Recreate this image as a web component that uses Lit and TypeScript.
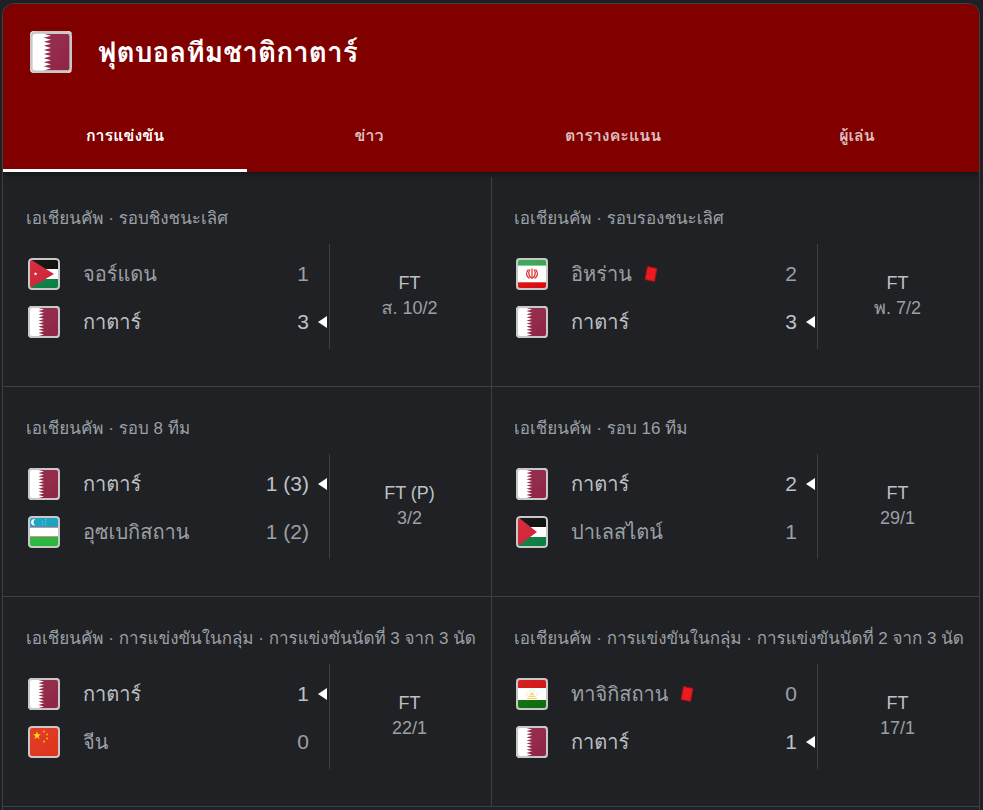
import { LitElement, html, css, svg } from "lit";
import { customElement, property } from "lit/decorators.js";

type Country = "qa" | "jo" | "ir" | "uz" | "ps" | "cn" | "tj";

interface Side {
  flag: Country;
  name: string;
  score: string;
  winner?: boolean;
  redCard?: boolean;
}

interface Match {
  stage: string;
  sides: Side[];
  status: string;
  date: string;
}

const matches: Match[] = [
  {
    stage: "เอเชียนคัพ · รอบชิงชนะเลิศ",
    sides: [
      { flag: "jo", name: "จอร์แดน", score: "1" },
      { flag: "qa", name: "กาตาร์", score: "3", winner: true },
    ],
    status: "FT",
    date: "ส. 10/2",
  },
  {
    stage: "เอเชียนคัพ · รอบรองชนะเลิศ",
    sides: [
      { flag: "ir", name: "อิหร่าน", score: "2", redCard: true },
      { flag: "qa", name: "กาตาร์", score: "3", winner: true },
    ],
    status: "FT",
    date: "พ. 7/2",
  },
  {
    stage: "เอเชียนคัพ · รอบ 8 ทีม",
    sides: [
      { flag: "qa", name: "กาตาร์", score: "1 (3)", winner: true },
      { flag: "uz", name: "อุซเบกิสถาน", score: "1 (2)" },
    ],
    status: "FT (P)",
    date: "3/2",
  },
  {
    stage: "เอเชียนคัพ · รอบ 16 ทีม",
    sides: [
      { flag: "qa", name: "กาตาร์", score: "2", winner: true },
      { flag: "ps", name: "ปาเลสไตน์", score: "1" },
    ],
    status: "FT",
    date: "29/1",
  },
  {
    stage: "เอเชียนคัพ · การแข่งขันในกลุ่ม · การแข่งขันนัดที่ 3 จาก 3 นัด",
    sides: [
      { flag: "qa", name: "กาตาร์", score: "1", winner: true },
      { flag: "cn", name: "จีน", score: "0" },
    ],
    status: "FT",
    date: "22/1",
  },
  {
    stage: "เอเชียนคัพ · การแข่งขันในกลุ่ม · การแข่งขันนัดที่ 2 จาก 3 นัด",
    sides: [
      { flag: "tj", name: "ทาจิกิสถาน", score: "0", redCard: true },
      { flag: "qa", name: "กาตาร์", score: "1", winner: true },
    ],
    status: "FT",
    date: "17/1",
  },
];

/** Points of a five-pointed star centred on (cx, cy). */
const star = (cx: number, cy: number, r: number) =>
  Array.from({ length: 10 }, (_, i) => {
    const a = (Math.PI / 5) * i - Math.PI / 2;
    const k = i % 2 ? r * 0.4 : r;
    return `${(cx + k * Math.cos(a)).toFixed(2)},${(cy + k * Math.sin(a)).toFixed(2)}`;
  }).join(" ");

/** Maroon field with its serrated left edge of nine white teeth. */
const qatarField = () => {
  const tooth = 28 / 9;
  let d = "M32 2H10.500";
  for (let i = 0; i < 9; i++) {
    d += `L16 ${(2 + tooth * (i + 0.5)).toFixed(2)}L10.500 ${(2 + tooth * (i + 1)).toFixed(2)}`;
  }
  return d + "H32Z";
};

const flagArt = {
  qa: svg`<rect width="32" height="32" fill="#fff"/>
    <path d=${qatarField()} fill="#8f2344"/>`,
  jo: svg`<rect width="32" height="12" fill="#0a0a0a"/>
    <rect y="11" width="32" height="11" fill="#fff"/>
    <rect y="21" width="32" height="11" fill="#0a7d40"/>
    <path d="M2 1L26 16L2 30Z" fill="#d01f33"/>
    <polygon points=${star(7.5, 16, 2)} fill="#fff"/>`,
  ps: svg`<rect width="32" height="12" fill="#0a0a0a"/>
    <rect y="11" width="32" height="11" fill="#fff"/>
    <rect y="21" width="32" height="11" fill="#0a7d40"/>
    <path d="M2 1L21 16L2 30Z" fill="#d01f33"/>`,
  ir: svg`<rect width="32" height="32" fill="#fff"/>
    <rect width="32" height="8" fill="#34a350"/>
    <rect y="24" width="32" height="8" fill="#da0a0a"/>
    <path d="M2 7.500H30" stroke="#fff" stroke-opacity=".4"/>
    <path d="M2 24.500H30" stroke="#fff" stroke-opacity=".3"/>
    <g fill="none" stroke="#da2525" stroke-width="1.200">
      <path d="M16 10.500V21"/>
      <path d="M14 11.500C12 14 12.500 18.500 15.500 20"/>
      <path d="M18 11.500C20 14 19.500 18.500 16.500 20"/>
      <path d="M12.500 11.500C9.500 14 10 18.500 13.500 20.500"/>
      <path d="M19.500 11.500C22.500 14 22 18.500 18.500 20.500"/>
    </g>`,
  uz: svg`<rect width="32" height="11" fill="#12a0c0"/>
    <rect y="11" width="32" height="10" fill="#fff"/>
    <rect y="21" width="32" height="11" fill="#27b53c"/>
    <path d="M2 11.500H30M2 20.500H30" stroke="#d58a8a" />
    <path d="M7 3.200A3.200 3.200 0 1 0 7 9.400A4 4 0 0 1 7 3.200Z" fill="#fff"/>
    <g fill="#6cc6da"><path d="M14 7.500h1v1h-1zM14 5h1v1h-1zM17 3h1v1h-1zM17 5.200h1v1h-1zM17 7.500h1v1h-1z"/></g>`,
  cn: svg`<rect width="32" height="32" fill="#df3019"/>
    <polygon points=${star(9, 9.5, 4.2)} fill="#ffde00"/>
    <g fill="#f7b500">
      <circle cx="16" cy="5.500" r="1"/><circle cx="19" cy="8.500" r="1"/>
      <circle cx="19" cy="12.500" r="1"/><circle cx="16" cy="15.500" r="1"/>
    </g>`,
  tj: svg`<rect width="32" height="32" fill="#fff"/>
    <rect width="32" height="10" fill="#d01210"/>
    <rect y="22" width="32" height="10" fill="#0a6b0a"/>
    <g fill="none" stroke="#f8cf5a">
      <path d="M10.500 18A5.500 6 0 0 1 21.500 18" stroke-dasharray="1.200 1.500"/>
      <path d="M12.500 18.500H19.500M11 20.500H21M16 14V18"/>
      <path d="M14 17.500A2 2 0 0 1 18 17.500"/>
    </g>`,
};

@customElement("team-flag")
class TeamFlag extends LitElement {
  @property() country: Country = "qa";

  static styles = css`
    :host {
      display: block;
      width: 32px;
      height: 32px;
      flex: none;
    }
    .art {
      display: block;
      width: 100%;
      height: 100%;
      border-radius: 4px;
    }
  `;

  render() {
    return html`<svg class="art" viewBox="0 0 32 32" aria-hidden="true">
      <defs>
        <linearGradient id="shine" x1="0" y1="0" x2="1" y2="1">
          <stop offset="0" stop-color="#fff" stop-opacity=".08" />
          <stop offset="1" stop-color="#fff" stop-opacity="0" />
        </linearGradient>
      </defs>
      ${flagArt[this.country]}
      <rect width="32" height="32" fill="url(#shine)" />
      <rect x="1" y="1" width="30" height="30" rx="3" fill="none" stroke="#c8c8c8" stroke-width="2" />
    </svg>`;
  }
}

@customElement("match-card")
class MatchCard extends LitElement {
  @property({ attribute: false }) match!: Match;

  static styles = css`
    :host {
      display: block;
      min-width: 0;
    }
    .link {
      display: block;
      padding: 32px 0 37px;
      color: #9aa0a6;
      text-decoration: none;
    }
    .stage {
      margin: 0 0 0 23px;
      font-size: 17px;
      line-height: 20px;
      white-space: nowrap;
    }
    .body {
      display: grid;
      grid-template-columns: 67fr 33fr;
      margin-top: 15px;
    }
    .sides {
      display: grid;
      gap: 16px;
      padding: 14px 0 11px 25px;
      border-right: 1px solid #3c4043;
    }
    .side {
      display: flex;
      align-items: center;
      height: 32px;
      font-size: 20px;
    }
    .name {
      margin-left: 23px;
    }
    .card {
      flex: none;
      width: 14px;
      height: 18px;
      margin-left: 12px;
    }
    .score {
      margin-left: auto;
      margin-right: 20px;
      font-size: 21px;
    }
    .side.winner {
      color: #bdc1c6;
    }
    .winner .score {
      margin-right: 9px;
    }
    .arrow {
      flex: none;
      width: 9px;
      height: 12px;
      margin-right: 2px;
    }
    .result {
      display: grid;
      align-content: center;
      justify-items: center;
      padding: 0 2px 2px 0;
      font-size: 18px;
      line-height: 25px;
    }
    .status {
      color: #bdc1c6;
    }
  `;

  render() {
    const m = this.match;
    return html`<a class="link" href="#">
      <p class="stage">${m.stage}</p>
      <div class="body">
        <div class="sides">
          ${m.sides.map(
            (s) => html`<div class="side ${s.winner ? "winner" : ""}">
              <team-flag .country=${s.flag}></team-flag>
              <span class="name">${s.name}</span>
              ${s.redCard
                ? html`<svg class="card" viewBox="0 0 14 18" aria-hidden="true">
                    <path d="M3.500 1.500L13 3.500L10.500 16.500L1 14.500Z" fill="#ea1b22" stroke="#a31218" />
                  </svg>`
                : ""}
              <span class="score">${s.score}</span>
              ${s.winner
                ? html`<svg class="arrow" viewBox="0 0 9 12" aria-hidden="true">
                    <path d="M9 0V12L0 6Z" fill="#fff" />
                  </svg>`
                : ""}
            </div>`
          )}
        </div>
        <div class="result">
          <span class="status">${m.status}</span>
          <span>${m.date}</span>
        </div>
      </div>
    </a>`;
  }
}

@customElement("app-root")
class AppRoot extends LitElement {
  static styles = css`
    :host {
      display: flex;
      flex-direction: column;
      box-sizing: border-box;
      min-height: 100vh;
      padding: 3px 3px 0 2px;
      background: #1f1f24;
      font-family: "Liberation Sans", Loma, Waree, Garuda, "Noto Sans Thai Looped", "Noto Sans Thai", sans-serif;
    }
    .panel {
      flex: 1;
      border: 1px solid #3c4043;
      border-bottom: 0;
      border-radius: 12px 12px 0 0;
      background: #202124;
      overflow: hidden;
    }
    .head {
      position: relative;
      background: #800000;
      box-shadow: 0 1px 6px rgba(0, 0, 0, 0.5);
    }
    .title-row {
      display: flex;
      align-items: center;
      height: 96px;
      padding-left: 27px;
    }
    .crest {
      width: 42px;
      height: 42px;
    }
    .title {
      margin: 0 0 0 26px;
      color: #fff;
      font-size: 28px;
      font-weight: 700;
    }
    .tabs {
      display: grid;
      grid-template-columns: repeat(4, 1fr);
    }
    .tab {
      height: 72px;
      padding: 2px 0 0;
      border: 0;
      border-bottom: 3px solid transparent;
      background: none;
      color: rgba(255, 255, 255, 0.75);
      font-family: inherit;
      font-size: 16px;
      font-weight: 700;
    }
    .tab.active {
      border-bottom-color: #fff;
      color: #fff;
    }
    .matches {
      display: grid;
      grid-template-columns: 1fr 1fr;
      padding-top: 5px;
    }
    .cell {
      border-bottom: 1px solid #3c4043;
    }
    .cell:nth-child(even) {
      box-shadow: inset 1px 0 #3c4043;
    }
  `;

  render() {
    const tabs = ["การแข่งขัน", "ข่าว", "ตารางคะแนน", "ผู้เล่น"];
    return html`<main class="panel">
      <header class="head">
        <div class="title-row">
          <team-flag class="crest" .country=${"qa"}></team-flag>
          <h1 class="title">ฟุตบอลทีมชาติกาตาร์</h1>
        </div>
        <nav class="tabs" role="tablist">
          ${tabs.map(
            (t, i) => html`<button
              class="tab ${i === 0 ? "active" : ""}"
              role="tab"
              aria-selected=${i === 0 ? "true" : "false"}
            >${t}</button>`
          )}
        </nav>
      </header>
      <section class="matches">
        ${matches.map((m) => html`<match-card class="cell" .match=${m}></match-card>`)}
      </section>
    </main>`;
  }
}
